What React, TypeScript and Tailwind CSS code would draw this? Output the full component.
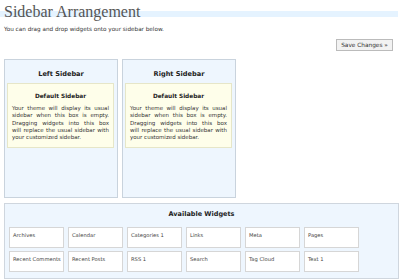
import React from 'react';

const widgets = [
  'Archives',
  'Calendar',
  'Categories 1',
  'Links',
  'Meta',
  'Pages',
  'Recent Comments',
  'Recent Posts',
  'RSS 1',
  'Search',
  'Tag Cloud',
  'Text 1'
];

const lines = [
  'Your theme will display its usual',
  'sidebar when this box is empty.',
  'Dragging widgets into this box',
  'will replace the usual sidebar with'
];

function SidebarPanel({ title }: { title: string }) {
  return (
    <div className="w-[114px] h-[139px] border border-[#c9d3dd] bg-[#eef6fe]">
      <div className="pt-[10px] text-center font-bold text-[6.6px] leading-[8px] text-[#222]">
        {title}
      </div>
      <div className="mt-[5px] ml-[2px] w-[107px] h-[65px] border border-[#e6e6c8] bg-[#fefeea] px-[4px]">
        <div className="pt-[9px] text-center font-bold text-[5.8px] leading-[7px] text-[#222]">
          Default Sidebar
        </div>
        <div className="mt-[5px] text-[5.5px] leading-[7.3px] text-[#333]">
          {lines.map((line) => (
            <div key={line} className="text-justify [text-align-last:justify]">
              {line}
            </div>
          ))}
          <div>your customized sidebar.</div>
        </div>
      </div>
    </div>
  );
}

export default function App() {
  return (
    <div className="w-[400px] h-[280px] overflow-hidden bg-white text-[#333] font-['DejaVu_Sans',Verdana,sans-serif]">
      <h2 className="mt-[11px] mr-[2px] h-0 pl-[4px] leading-[0px] border-b-[6px] border-[#e5f3ff] font-['Liberation_Serif',serif] text-[16px] font-normal text-[#555]">
        <span className="relative top-[1px]">Sidebar Arrangement</span>
      </h2>
      <p className="mt-[8px] pl-[4px] text-[5.7px] leading-[8px]">
        You can drag and drop widgets onto your sidebar below.
      </p>
      <div className="mt-[6px] flex justify-end pr-[7px]">
        <button className="w-[57px] h-[12px] border border-[#bbb] bg-[#f2f2f2] text-[5.8px] leading-[10px] text-[#333]">
          Save Changes »
        </button>
      </div>
      <div className="mt-[8px] flex gap-[4px] pl-[4px]">
        <SidebarPanel title="Left Sidebar" />
        <SidebarPanel title="Right Sidebar" />
      </div>
      <div className="mt-[5px] ml-[4px] w-[395px] h-[76px] border border-[#cfd6de] bg-[#eef6fe]">
        <div className="pt-[6px] text-center font-bold text-[6.5px] leading-[8px] text-[#222]">
          Available Widgets
        </div>
        <div className="mt-[9px] grid grid-cols-[repeat(6,55px)] gap-x-[4px] gap-y-[3px] pl-[4px]">
          {widgets.map((w) => (
            <div
              key={w}
              className="h-[21px] border border-[#d6d6d6] bg-white pl-[3px] pt-[4px] text-[5.2px] leading-[6px] text-[#444]"
            >
              {w}
            </div>
          ))}
        </div>
      </div>
    </div>
  );
}
